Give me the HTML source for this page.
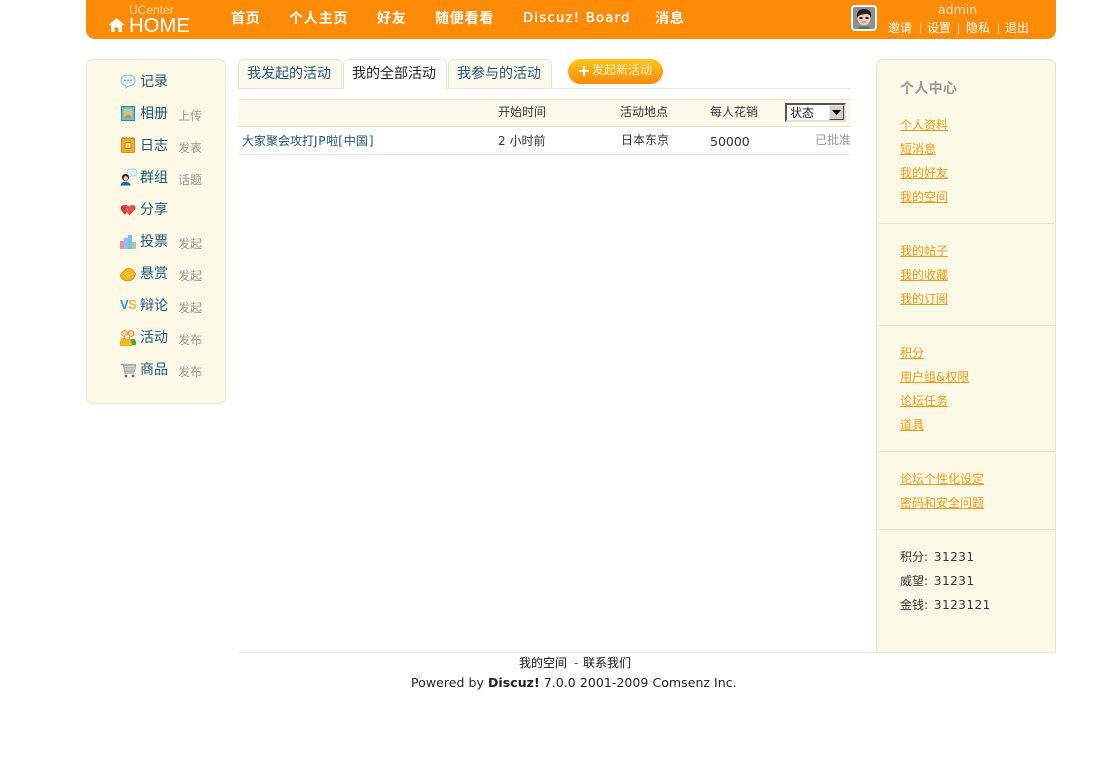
<!DOCTYPE html>
<html><head><meta charset="utf-8"><title>活动</title>
<style>
html,body{margin:0;padding:0;background:#fff}
body{width:1098px;height:763px;position:relative;overflow:hidden;font:12px/16px "DejaVu Sans","WenQuanYi Zen Hei","Noto Sans CJK SC",sans-serif;color:#333}
a{text-decoration:none;color:inherit}
.t,.b,svg{position:absolute}
.t{white-space:nowrap}
.n{color:#fff;font-weight:bold;font-size:14px;line-height:18px;top:9px;font-family:"Noto Sans CJK SC",sans-serif;letter-spacing:.8px}
.u{color:#fff;font-size:12px;top:20px}
.m{font-size:14px;line-height:18px;color:#225577;left:140px;margin-top:1px}
.s{font-size:12px;color:#999;left:178px}
.tab{position:absolute;top:59px;height:29px;background:#fcfaea;border:1px solid #e6e6cf;border-bottom:0;border-radius:5px 5px 0 0;text-align:center;font-size:14px;line-height:29px;color:#225577;box-sizing:border-box;text-indent:-2px}
.o{color:#ee9a1a;text-decoration:underline;left:900px}
.k{left:900px;color:#333;word-spacing:1px}
.k span{letter-spacing:.5px;margin-left:1px}
.h{color:#333;top:104px}
</style></head><body>

<div class="b" style="left:86px;top:0;width:970px;height:39px;background:#fe8b05;border-radius:0 0 9px 9px"></div>
<div class="t" style="left:129px;top:3px;font:12px/14px 'Liberation Sans',sans-serif;color:#ffd9a6">UCenter</div>
<div class="t" style="left:129px;top:14px;font:20.300px/24px 'Liberation Sans',sans-serif;color:#fff">HOME</div>
<svg style="left:108px;top:17px" width="17" height="16" viewBox="0 0 17 16"><path d="M8.500 1 L16.500 8 L14 8 L14 15 L10.500 15 L10.500 10.500 L6.500 10.500 L6.500 15 L3 15 L3 8 L.5 8 Z" fill="#fff"/></svg>

<div class="t n" style="left:231px">首页</div>
<div class="t n" style="left:289px">个人主页</div>
<div class="t n" style="left:377px">好友</div>
<div class="t n" style="left:435px">随便看看</div>
<div class="t n" style="left:523px;font-family:'DejaVu Sans',sans-serif;font-size:13px;font-weight:normal;letter-spacing:1.35px;top:10px;-webkit-text-stroke:.35px #fff">Discuz! Board</div>
<div class="t n" style="left:655px">消息</div>

<div class="b" style="left:851px;top:5px;width:26px;height:26px;background:#fff;border-radius:4px"></div>
<svg style="left:853px;top:7px" width="22" height="22" viewBox="0 0 22 22"><rect width="22" height="22" rx="2" fill="#8f8f8f"/><ellipse cx="11" cy="11" rx="6.500" ry="7.500" fill="#f2cdb5"/><path d="M4 11 C3 3 8 2 11 2 C16 2 19 5 18 11 C17 8 15 6.500 12 7 C9 8 6 7.500 4 11Z" fill="#2a1d1d"/><rect x="6.500" y="10" width="3" height="2" fill="#222"/><rect x="12.500" y="10" width="3" height="2" fill="#222"/><path d="M9 15h4" stroke="#b3494d"/><path d="M5 22c0-4 12-4 12 0z" fill="#4f7f5f"/></svg>

<div class="t" style="left:938px;top:2px;color:#ffe2bd;font-size:12.500px">admin</div>
<div class="t u" style="left:888px">邀请</div>
<div class="t u" style="left:927px">设置</div>
<div class="t u" style="left:966px">隐私</div>
<div class="t u" style="left:1005px">退出</div>
<div class="b" style="left:920px;top:23px;width:1px;height:11px;background:#ffd9a6"></div>
<div class="b" style="left:958px;top:23px;width:1px;height:11px;background:#ffd9a6"></div>
<div class="b" style="left:998px;top:23px;width:1px;height:11px;background:#ffd9a6"></div>

<div class="b" style="left:86px;top:59px;width:140px;height:345px;box-sizing:border-box;background:#fcf9e6;border:1px solid #e8e8d0;border-radius:7px"></div>

<svg style="left:120px;top:74px" width="16" height="15" viewBox="0 0 16 15"><path d="M8 1C12 1 15 3 15 6.500C15 10 12 12 8.500 12L6 14L5.500 11.500C3 11 1 9.500 1 6.500C1 3 4 1 8 1Z" fill="#dff0f8" stroke="#8fc3da"/><circle cx="5" cy="6.500" r=".9" fill="#7fb3cf"/><circle cx="8" cy="6.500" r=".9" fill="#7fb3cf"/><circle cx="11" cy="6.500" r=".9" fill="#7fb3cf"/></svg>
<div class="t m" style="top:72px">记录</div>

<svg style="left:121px;top:106px" width="14" height="15" viewBox="0 0 14 15"><rect x=".5" y=".5" width="13" height="14" fill="#6fc0d4" stroke="#3f7f99"/><rect x="3" y="3" width="8" height="9" fill="#a3d98c"/><circle cx="7" cy="6.500" r="2" fill="#f2b27a"/><path d="M3.500 12c0-4 7-4 7 0z" fill="#e8843a"/></svg>
<div class="t m" style="top:104px">相册</div>
<div class="t s" style="top:108px">上传</div>

<svg style="left:121px;top:137px" width="14" height="16" viewBox="0 0 14 16"><path d="M.5 2l1.500-1.500 1.500 1.500 1.700-1.500 1.800 1.500 1.800-1.500 1.700 1.500 1.500-1.500L13.500 2v12.500a1 1 0 0 1-1 1h-11a1 1 0 0 1-1-1z" fill="#f6b01c" stroke="#a8741a" stroke-width=".8"/><rect x="4" y="5.500" width="6" height="6" rx="1" fill="#fbe7a8" stroke="#b8801a"/><rect x="6" y="7.500" width="2" height="2" fill="#f6b01c"/></svg>
<div class="t m" style="top:136px">日志</div>
<div class="t s" style="top:140px">发表</div>

<svg style="left:120px;top:168px" width="17" height="18" viewBox="0 0 17 18"><path d="M9 1h5a2.500 2.500 0 0 1 2.500 2.500v2A2.500 2.500 0 0 1 14 8H11L7 11l1-4C6 5 7 1 9 1z" fill="#dcebf4" stroke="#a0c2d6" stroke-width=".7"/><circle cx="5.500" cy="9.500" r="3.500" fill="#222"/><circle cx="5.800" cy="10.300" r="2.200" fill="#f2c7a2"/><path d="M.5 17.500c0-5 10-5 10 0z" fill="#16689e"/></svg>
<div class="t m" style="top:168px">群组</div>
<div class="t s" style="top:172px">话题</div>

<svg style="left:120px;top:203px" width="16" height="13" viewBox="0 0 16 13"><path d="M5 12L1 7C-.5 4 2 1 4.500 2.500C6 1 9 2.500 8.500 6z" fill="#c93f42"/><path d="M9.500 12.500L5.500 7.500C4.500 4.500 7 2 9.500 3.500C12 .5 16.500 2.500 15.500 6z" fill="#e64e50"/><path d="M7 6l1 1.500" stroke="#f7b2b2"/></svg>
<div class="t m" style="top:200px">分享</div>

<svg style="left:120px;top:234px" width="16" height="15" viewBox="0 0 16 15"><rect y="7" width="4" height="8" fill="#f08aa8"/><rect x="4" y="4" width="4" height="11" fill="#8ac4ec"/><rect x="8" y="1" width="4" height="14" fill="#7cc0de"/><rect x="12" y="8" width="4" height="7" fill="#95d49a"/></svg>
<div class="t m" style="top:232px">投票</div>
<div class="t s" style="top:236px">发起</div>

<svg style="left:120px;top:267px" width="16" height="15" viewBox="0 0 16 15"><path d="M.5 7.500L6 2C8 1 11 1 13 3L15.500 6.500C15.500 10 12 14 8 14C4 14 0 11 .5 7.500Z" fill="#f8b51c" stroke="#d8860e" stroke-width=".8"/><path d="M4 8l5-3M7 10l5-3" stroke="#fbe08a"/></svg>
<div class="t m" style="top:264px">悬赏</div>
<div class="t s" style="top:268px">发起</div>

<div class="t" style="left:120px;top:298px;font:bold 13px/14px 'Liberation Sans',sans-serif;letter-spacing:-.5px;color:#2a9bd6">V<span style="color:#f0b44a">S</span></div>
<div class="t m" style="top:296px">辩论</div>
<div class="t s" style="top:300px">发起</div>

<svg style="left:120px;top:330px" width="16" height="16" viewBox="0 0 16 16"><circle cx="4.500" cy="3.500" r="2.900" fill="#fbdfb0" stroke="#d8883a"/><circle cx="11" cy="3.500" r="2.900" fill="#fbdfb0" stroke="#d8883a"/><path d="M9 15c0-8 7-8 7-2v2z" fill="#3aa83a"/><path d="M0 16c0-9 5-8 6-8c3 0 6 1 6 8z" fill="#f6bc1e" stroke="#d89012" stroke-width=".6"/><circle cx="7" cy="7" r="2.700" fill="#fbdfb0" stroke="#d8883a" stroke-width=".7"/></svg>
<div class="t m" style="top:328px">活动</div>
<div class="t s" style="top:332px">发布</div>

<svg style="left:121px;top:363px" width="15" height="15" viewBox="0 0 15 15"><path d="M0 1.500H2.500L4 10H13" fill="none" stroke="#8a8a8a"/><path d="M2 1.500H15L13.500 8.500H3.500z" fill="#a8a8a8" stroke="#888" stroke-width=".5"/><path d="M3 3.500H14.500M3.300 5.200H14M3.500 7H13.800" stroke="#eee" stroke-width=".7"/><circle cx="5" cy="13" r="1.500" fill="#777"/><circle cx="12" cy="13" r="1.500" fill="#777"/></svg>
<div class="t m" style="top:360px">商品</div>
<div class="t s" style="top:364px">发布</div>

<div class="b" style="left:238px;top:88px;width:613px;height:1px;background:#e6e6cf"></div>
<div class="tab" style="left:238px;width:104px">我发起的活动</div>
<div class="tab" style="left:343px;top:59px;width:104px;height:30px;background:#fff;color:#222">我的全部活动</div>
<div class="tab" style="left:448px;width:104px">我参与的活动</div>

<div class="b" style="left:568px;top:59px;width:95px;height:25px;border-radius:13px;background:linear-gradient(#ffc61c,#fe8a08)"></div>
<svg style="left:578px;top:65px" width="12" height="12" viewBox="0 0 12 12"><path d="M6 1v10M1 6h10" stroke="#fff" stroke-width="2"/></svg>
<div class="t" style="left:592px;top:62px;color:#fdf0c4;font-size:12px">发起新活动</div>

<div class="b" style="left:238px;top:99px;width:613px;height:28px;box-sizing:border-box;background:#fcfaea;border-top:1px solid #e6e6cf;border-bottom:1px solid #e6e6cf"></div>
<div class="t h" style="left:498px">开始时间</div>
<div class="t h" style="left:620px">活动地点</div>
<div class="t h" style="left:710px">每人花销</div>
<div class="b" style="left:785px;top:103px;width:61px;height:19px;box-sizing:border-box;background:#fff;border:2px solid;border-color:#555 #ddd #ddd #555"></div>
<div class="t" style="left:790px;top:105px;color:#222">状态</div>
<div class="b" style="left:829px;top:105px;width:15px;height:15px;box-sizing:border-box;background:#d4d0c8;border:1px solid;border-color:#eee #444 #444 #eee"></div>
<svg style="left:832px;top:110px" width="9" height="5"><path d="M0 0h9L4.500 5z" fill="#000"/></svg>

<div class="b" style="left:238px;top:154px;width:613px;height:1px;background:#ecead2"></div>
<div class="t" style="left:242px;top:133px;color:#225577">大家聚会攻打<span style="letter-spacing:.7px">JP</span>啦<span style="letter-spacing:1px">[</span>中国<span style="margin-left:1px">]</span></div>
<div class="t" style="left:498px;top:133px">2 小时前</div>
<div class="t" style="left:621px;top:132px">日本东京</div>
<div class="t" style="left:710px;top:134px;font-size:12.500px">50000</div>
<div class="t" style="left:815px;top:132px;color:#999">已批准</div>

<div class="b" style="left:876px;top:59px;width:180px;height:594px;box-sizing:border-box;background:#fcf9e6;border:1px solid #e6e6cf;border-bottom:0;border-radius:7px 7px 0 0"></div>
<div class="b" style="left:877px;top:223px;width:178px;height:1px;background:#e6e6cf"></div>
<div class="b" style="left:877px;top:325px;width:178px;height:1px;background:#e6e6cf"></div>
<div class="b" style="left:877px;top:451px;width:178px;height:1px;background:#e6e6cf"></div>
<div class="b" style="left:877px;top:529px;width:178px;height:1px;background:#e6e6cf"></div>

<div class="t" style="left:900px;top:79px;font-size:14px;line-height:18px;font-weight:bold;color:#999;font-family:'Noto Sans CJK SC',sans-serif;letter-spacing:.3px">个人中心</div>
<a class="t o" style="top:117px">个人资料</a>
<a class="t o" style="top:141px">短消息</a>
<a class="t o" style="top:165px">我的好友</a>
<a class="t o" style="top:189px">我的空间</a>
<a class="t o" style="top:243px">我的帖子</a>
<a class="t o" style="top:267px">我的收藏</a>
<a class="t o" style="top:291px">我的订阅</a>
<a class="t o" style="top:345px">积分</a>
<a class="t o" style="top:369px">用户组&amp;权限</a>
<a class="t o" style="top:393px">论坛任务</a>
<a class="t o" style="top:417px">道具</a>
<a class="t o" style="top:471px">论坛个性化设定</a>
<a class="t o" style="top:495px">密码和安全问题</a>
<div class="t k" style="top:549px">积分: <span>31231</span></div>
<div class="t k" style="top:573px">威望: <span>31231</span></div>
<div class="t k" style="top:597px">金钱: <span>3123121</span></div>

<div class="b" style="left:238px;top:652px;width:818px;height:1px;background:#ecead2"></div>
<div class="t" style="left:519px;top:655px;color:#111">我的空间</div>
<div class="t" style="left:574px;top:655px;color:#555">-</div>
<div class="t" style="left:583px;top:655px;color:#111">联系我们</div>
<div class="t" style="left:411px;top:675px;color:#222;font-size:12.500px;letter-spacing:.05px">Powered by <b>Discuz!</b> 7.0.0 2001-2009 Comsenz Inc.</div>

</body></html>
